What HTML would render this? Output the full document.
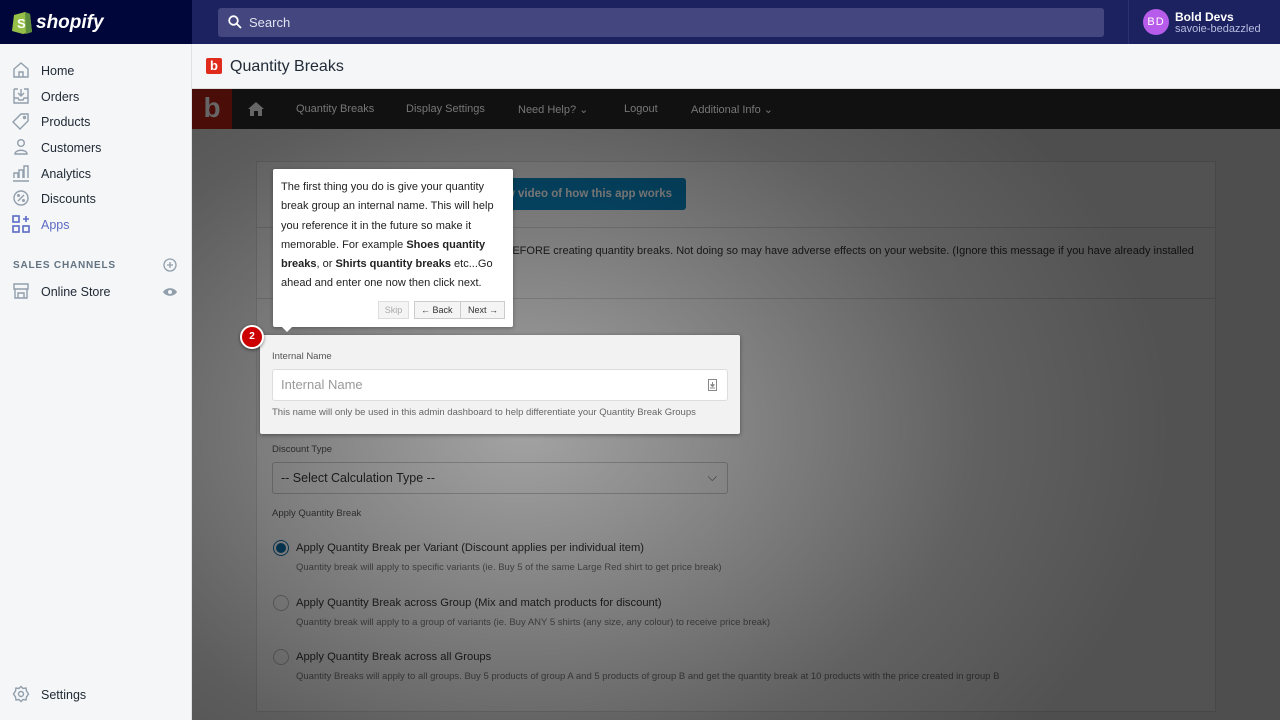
<!DOCTYPE html>
<html><head><meta charset="utf-8"><style>
*{box-sizing:border-box;margin:0;padding:0}
html,body{width:1280px;height:720px;overflow:hidden}
body{font-family:"Liberation Sans",sans-serif;background:#f4f6f8;position:relative}
.top{position:absolute;left:0;top:0;width:1280px;height:44px;background:#1c2260}
.logoarea{position:absolute;left:0;top:0;width:192px;height:44px;background:#000639}
.search{position:absolute;left:218px;top:8px;width:886px;height:29px;background:#43467f;border-radius:3px;color:#e0e2f0;font-size:13px;line-height:29px;padding-left:31px}
.user{position:absolute;left:1128px;top:0;width:152px;height:44px;border-left:1px solid #2a3070}
.av{position:absolute;left:14px;top:9px;width:26px;height:26px;border-radius:50%;background:#b65bea;color:#fff;font-size:11px;line-height:26px;text-align:center;letter-spacing:1px}
.side{position:absolute;left:0;top:44px;width:192px;height:676px;background:#f4f6f8;border-right:1px solid #dfe3e8}
.ni{position:absolute;left:41px;font-size:12.5px;color:#212b36}
.ic{position:absolute;left:12px}
.hdr{position:absolute;left:192px;top:44px;width:1088px;height:45px;background:#f4f6f8;border-bottom:1px solid #ddd}
.nav{position:absolute;left:192px;top:89px;width:1088px;height:40px;background:#111}
.nav span{position:absolute;top:14px;font-size:11px;color:#777}
.app{position:absolute;left:192px;top:129px;width:1088px;height:591px;background:#f2f2f2;overflow:hidden}
.card{position:absolute;left:64px;top:32px;width:960px;height:551px;background:#fff;border:1px solid #ddd;overflow:hidden}
.ov{position:absolute;left:192px;top:129px;width:1088px;height:591px;background:radial-gradient(ellipse 650px 480px at 330px 300px,rgba(0,0,0,.36),rgba(0,0,0,.62) 70%,rgba(0,0,0,.68))}
.t{position:absolute;color:#333;white-space:nowrap}
.rad{position:absolute;left:81px;width:16px;height:16px;border-radius:50%;border:1px solid #bbb;background:#fff}
</style></head><body>
<div class="top"></div>
<div class="logoarea">
<svg style="position:absolute;left:11px;top:9px" width="22" height="25" viewBox="0 0 22 25"><path d="M3 6 L14 3 L19 5 L21 23 L12 25 L1 22 Z" fill="#95bf47"/><path d="M14 3 L19 5 L21 23 L15 25Z" fill="#5e8e3e"/><text x="6" y="19" font-size="13" font-weight="bold" fill="#fff" font-family="Liberation Sans">S</text></svg>
<div style="position:absolute;left:36px;top:12px;color:#fff;font-weight:bold;font-style:italic;font-size:19px">shopify</div>
</div>
<div class="search"><svg style="position:absolute;left:10px;top:7px" width="14" height="14" viewBox="0 0 14 14"><circle cx="5.5" cy="5.5" r="4.3" fill="none" stroke="#fff" stroke-width="1.8"/><path d="M8.7 8.7 13 13" stroke="#fff" stroke-width="1.8"/></svg>Search</div>
<div class="user"><div class="av">BD</div><div style="position:absolute;left:46px;top:10px;color:#fff;font-size:12px;font-weight:bold">Bold Devs</div><div style="position:absolute;left:46px;top:23px;color:#b8bde0;font-size:11px">savoie-bedazzled</div></div>

<div class="side">
<svg class="ic" style="top:17px" width="18" height="18" viewBox="0 0 18 18" fill="none" stroke="#919eab" stroke-width="1.4"><path d="M2 8 L9 2 L16 8 V16 H2Z M7 16V11H11V16"/></svg><div class="ni" style="top:20px">Home</div>
<svg class="ic" style="top:43px" width="18" height="18" viewBox="0 0 18 18" fill="none" stroke="#919eab" stroke-width="1.4"><path d="M2 2H6M12 2H16V16H2V2M2 11H6L7 13H11L12 11H16M9 2V9M6 6L9 9L12 6"/></svg><div class="ni" style="top:46px">Orders</div>
<svg class="ic" style="top:68px" width="18" height="18" viewBox="0 0 18 18" fill="none" stroke="#919eab" stroke-width="1.4"><path d="M9 2H16V9L8 17L1 10Z"/><circle cx="12.5" cy="5.5" r="1"/></svg><div class="ni" style="top:71px">Products</div>
<svg class="ic" style="top:94px" width="18" height="18" viewBox="0 0 18 18" fill="none" stroke="#919eab" stroke-width="1.4"><circle cx="9" cy="5" r="3.3"/><path d="M3 16C3 11 15 11 15 16Z"/></svg><div class="ni" style="top:97px">Customers</div>
<svg class="ic" style="top:120px" width="18" height="18" viewBox="0 0 18 18" fill="none" stroke="#919eab" stroke-width="1.4"><path d="M1 17H17M2 14V9H6V14M7 14V6H11V14M12 14V2H16V14"/></svg><div class="ni" style="top:123px">Analytics</div>
<svg class="ic" style="top:145px" width="18" height="18" viewBox="0 0 18 18" fill="none" stroke="#919eab" stroke-width="1.4"><circle cx="9" cy="9" r="7"/><path d="M6 12L12 6"/><circle cx="6.5" cy="6.5" r=".8"/><circle cx="11.5" cy="11.5" r=".8"/></svg><div class="ni" style="top:148px">Discounts</div>
<svg class="ic" style="top:171px" width="18" height="18" viewBox="0 0 18 18" fill="none" stroke="#5c6ac4" stroke-width="1.6"><rect x="1" y="1" width="6" height="6"/><rect x="1" y="11" width="6" height="6"/><rect x="11" y="11" width="6" height="6"/><path d="M14 1V7M11 4H17"/></svg><div class="ni" style="top:174px;color:#5c6ac4">Apps</div>
<div style="position:absolute;left:13px;top:216px;font-size:10px;color:#637381;letter-spacing:.8px;font-weight:bold">SALES CHANNELS</div>
<svg style="position:absolute;left:163px;top:214px" width="14" height="14" viewBox="0 0 14 14" fill="none" stroke="#919eab" stroke-width="1.3"><circle cx="7" cy="7" r="6"/><path d="M7 4V10M4 7H10"/></svg>
<svg class="ic" style="top:238px" width="18" height="18" viewBox="0 0 18 18" fill="none" stroke="#919eab" stroke-width="1.4"><path d="M2 2H16V7H2ZM3 7V16H15V7M6 16V11H12V16"/></svg><div class="ni" style="top:241px">Online Store</div>
<svg style="position:absolute;left:163px;top:243px" width="14" height="10" viewBox="0 0 14 10"><path d="M0 5C3 0 11 0 14 5C11 10 3 10 0 5Z" fill="#919eab"/><circle cx="7" cy="5" r="2" fill="#f4f6f8"/></svg>
<svg class="ic" style="top:641px" width="18" height="18" viewBox="0 0 18 18" fill="none" stroke="#919eab" stroke-width="1.4"><circle cx="9" cy="9" r="2.5"/><path d="M9 1.5L11 3.5L14 3L14.5 6L16.5 9L14.5 12L14 15L11 14.5L9 16.5L7 14.5L4 15L3.5 12L1.5 9L3.5 6L4 3L7 3.5Z"/></svg><div class="ni" style="top:644px">Settings</div>
</div>

<div class="hdr"><div style="position:absolute;left:14px;top:14px;width:16px;height:16px;background:#e02a1b;border-radius:2px;color:#fff;font-weight:bold;font-size:13px;line-height:16px;text-align:center">b</div><div style="position:absolute;left:38px;top:14px;font-size:16px;color:#212b36">Quantity Breaks</div></div>
<div class="nav"><div style="position:absolute;left:0;top:0;width:40px;height:40px;background:#4a0d08;color:#666;font-weight:bold;font-size:28px;text-align:center;line-height:38px">b</div>
<svg style="position:absolute;left:56px;top:13px" width="16" height="14" viewBox="0 0 16 14"><path d="M8 0L16 7H14V14H10V9H6V14H2V7H0Z" fill="#666"/></svg>
<span style="left:104px">Quantity Breaks</span><span style="left:214px">Display Settings</span><span style="left:326px">Need Help? ⌄</span><span style="left:432px">Logout</span><span style="left:499px">Additional Info ⌄</span></div>

<div class="app"><div class="card">
<div style="position:absolute;left:0;top:65px;width:958px;height:1px;background:#ddd"></div>
<div style="position:absolute;left:0;top:136px;width:958px;height:1px;background:#ddd"></div>
<div style="position:absolute;left:174px;top:16px;width:255px;height:32px;background:#0a8ac7;border-radius:3px;color:#fff;font-size:11.5px;font-weight:bold;line-height:32px;text-align:right;padding-right:14px">View video of how this app works</div>
<div class="t" style="left:248px;top:83px;font-size:11px">BEFORE creating quantity breaks. Not doing so may have adverse effects on your website. (Ignore this message if you have already installed</div>
<div class="t" style="left:15px;top:282px;font-size:9.5px;color:#555">Discount Type</div>
<div style="position:absolute;left:15px;top:300px;width:456px;height:32px;border:1px solid #ccc;border-radius:3px;font-size:12.5px;color:#333;line-height:30px;padding-left:8px">-- Select Calculation Type --<span style="position:absolute;right:10px;top:-1px;color:#666">⌵</span></div>
<div class="t" style="left:15px;top:346px;font-size:9.5px;color:#555">Apply Quantity Break</div>
<div class="t" style="left:39px;top:380px;font-size:11.2px">Apply Quantity Break per Variant (Discount applies per individual item)</div>
<div class="t" style="left:39px;top:400px;font-size:9.5px;color:#777">Quantity break will apply to specific variants (ie. Buy 5 of the same Large Red shirt to get price break)</div>
<div class="t" style="left:39px;top:435px;font-size:11.2px">Apply Quantity Break across Group (Mix and match products for discount)</div>
<div class="t" style="left:39px;top:455px;font-size:9.5px;color:#777">Quantity break will apply to a group of variants (ie. Buy ANY 5 shirts (any size, any colour) to receive price break)</div>
<div class="t" style="left:39px;top:489px;font-size:11.2px">Apply Quantity Break across all Groups</div>
<div class="t" style="left:39px;top:509px;font-size:9.5px;color:#777">Quantity Breaks will apply to all groups. Buy 5 products of group A and 5 products of group B and get the quantity break at 10 products with the price created in group B</div>
</div>
<div class="rad" style="top:411px;border-color:#0a6aa0"><div style="position:absolute;left:2px;top:2px;width:10px;height:10px;border-radius:50%;background:#0a6aa0"></div></div>
<div class="rad" style="top:466px"></div>
<div class="rad" style="top:520px"></div>
</div>
<div class="ov"></div>

<div style="position:absolute;left:260px;top:335px;width:480px;height:99px;background:#f2f2f2;border-radius:2px;box-shadow:0 1px 4px rgba(0,0,0,.4)">
<div style="position:absolute;left:12px;top:16px;font-size:9.5px;color:#555">Internal Name</div>
<div style="position:absolute;left:12px;top:34px;width:456px;height:32px;background:#fff;border:1px solid #ddd;border-radius:3px;font-size:13px;color:#999;line-height:30px;padding-left:8px">Internal Name
<svg style="position:absolute;right:10px;top:9px" width="9" height="12" viewBox="0 0 9 12"><rect x=".5" y=".5" width="8" height="11" fill="none" stroke="#888"/><path d="M4.5 3V7M2.5 5.5L4.5 7.5L6.5 5.5M2 9H7" stroke="#888"/></svg></div>
<div style="position:absolute;left:12px;top:72px;font-size:9.5px;color:#666">This name will only be used in this admin dashboard to help differentiate your Quantity Break Groups</div>
</div>
<div style="position:absolute;left:240px;top:325px;width:24px;height:24px;border-radius:50%;background:#c00;border:2px solid #fff;box-shadow:0 1px 3px rgba(0,0,0,.5);color:#fff;font-size:10px;font-weight:bold;text-align:center;line-height:20px">2</div>

<div style="position:absolute;left:273px;top:169px;width:240px;height:158px;background:#fff;border-radius:2px;box-shadow:0 1px 4px rgba(0,0,0,.3)">
<div style="position:absolute;left:8px;top:9px;width:228px;font-size:11px;line-height:19.3px;color:#222">The first thing you do is give your quantity break group an internal name. This will help you reference it in the future so make it memorable. For example <b>Shoes quantity breaks</b>, or <b>Shirts quantity breaks</b> etc...Go ahead and enter one now then click next.</div>
<div style="position:absolute;left:105px;top:132px;width:31px;height:18px;border:1px solid #ddd;background:#f4f4f4;font-size:9px;color:#aaa;text-align:center;line-height:16px">Skip</div>
<div style="position:absolute;left:141px;top:132px;width:91px;height:18px;border:1px solid #ccc;background:#f4f4f4;font-size:9px;color:#333;line-height:16px"><span style="position:absolute;left:6px">← Back</span><span style="position:absolute;left:45px;top:0;height:16px;border-left:1px solid #ccc;padding-left:7px">Next →</span></div>
<div style="position:absolute;left:8px;top:157px;width:0;height:0;border-left:6px solid transparent;border-right:6px solid transparent;border-top:6px solid #fff"></div>
</div>
</body></html>
